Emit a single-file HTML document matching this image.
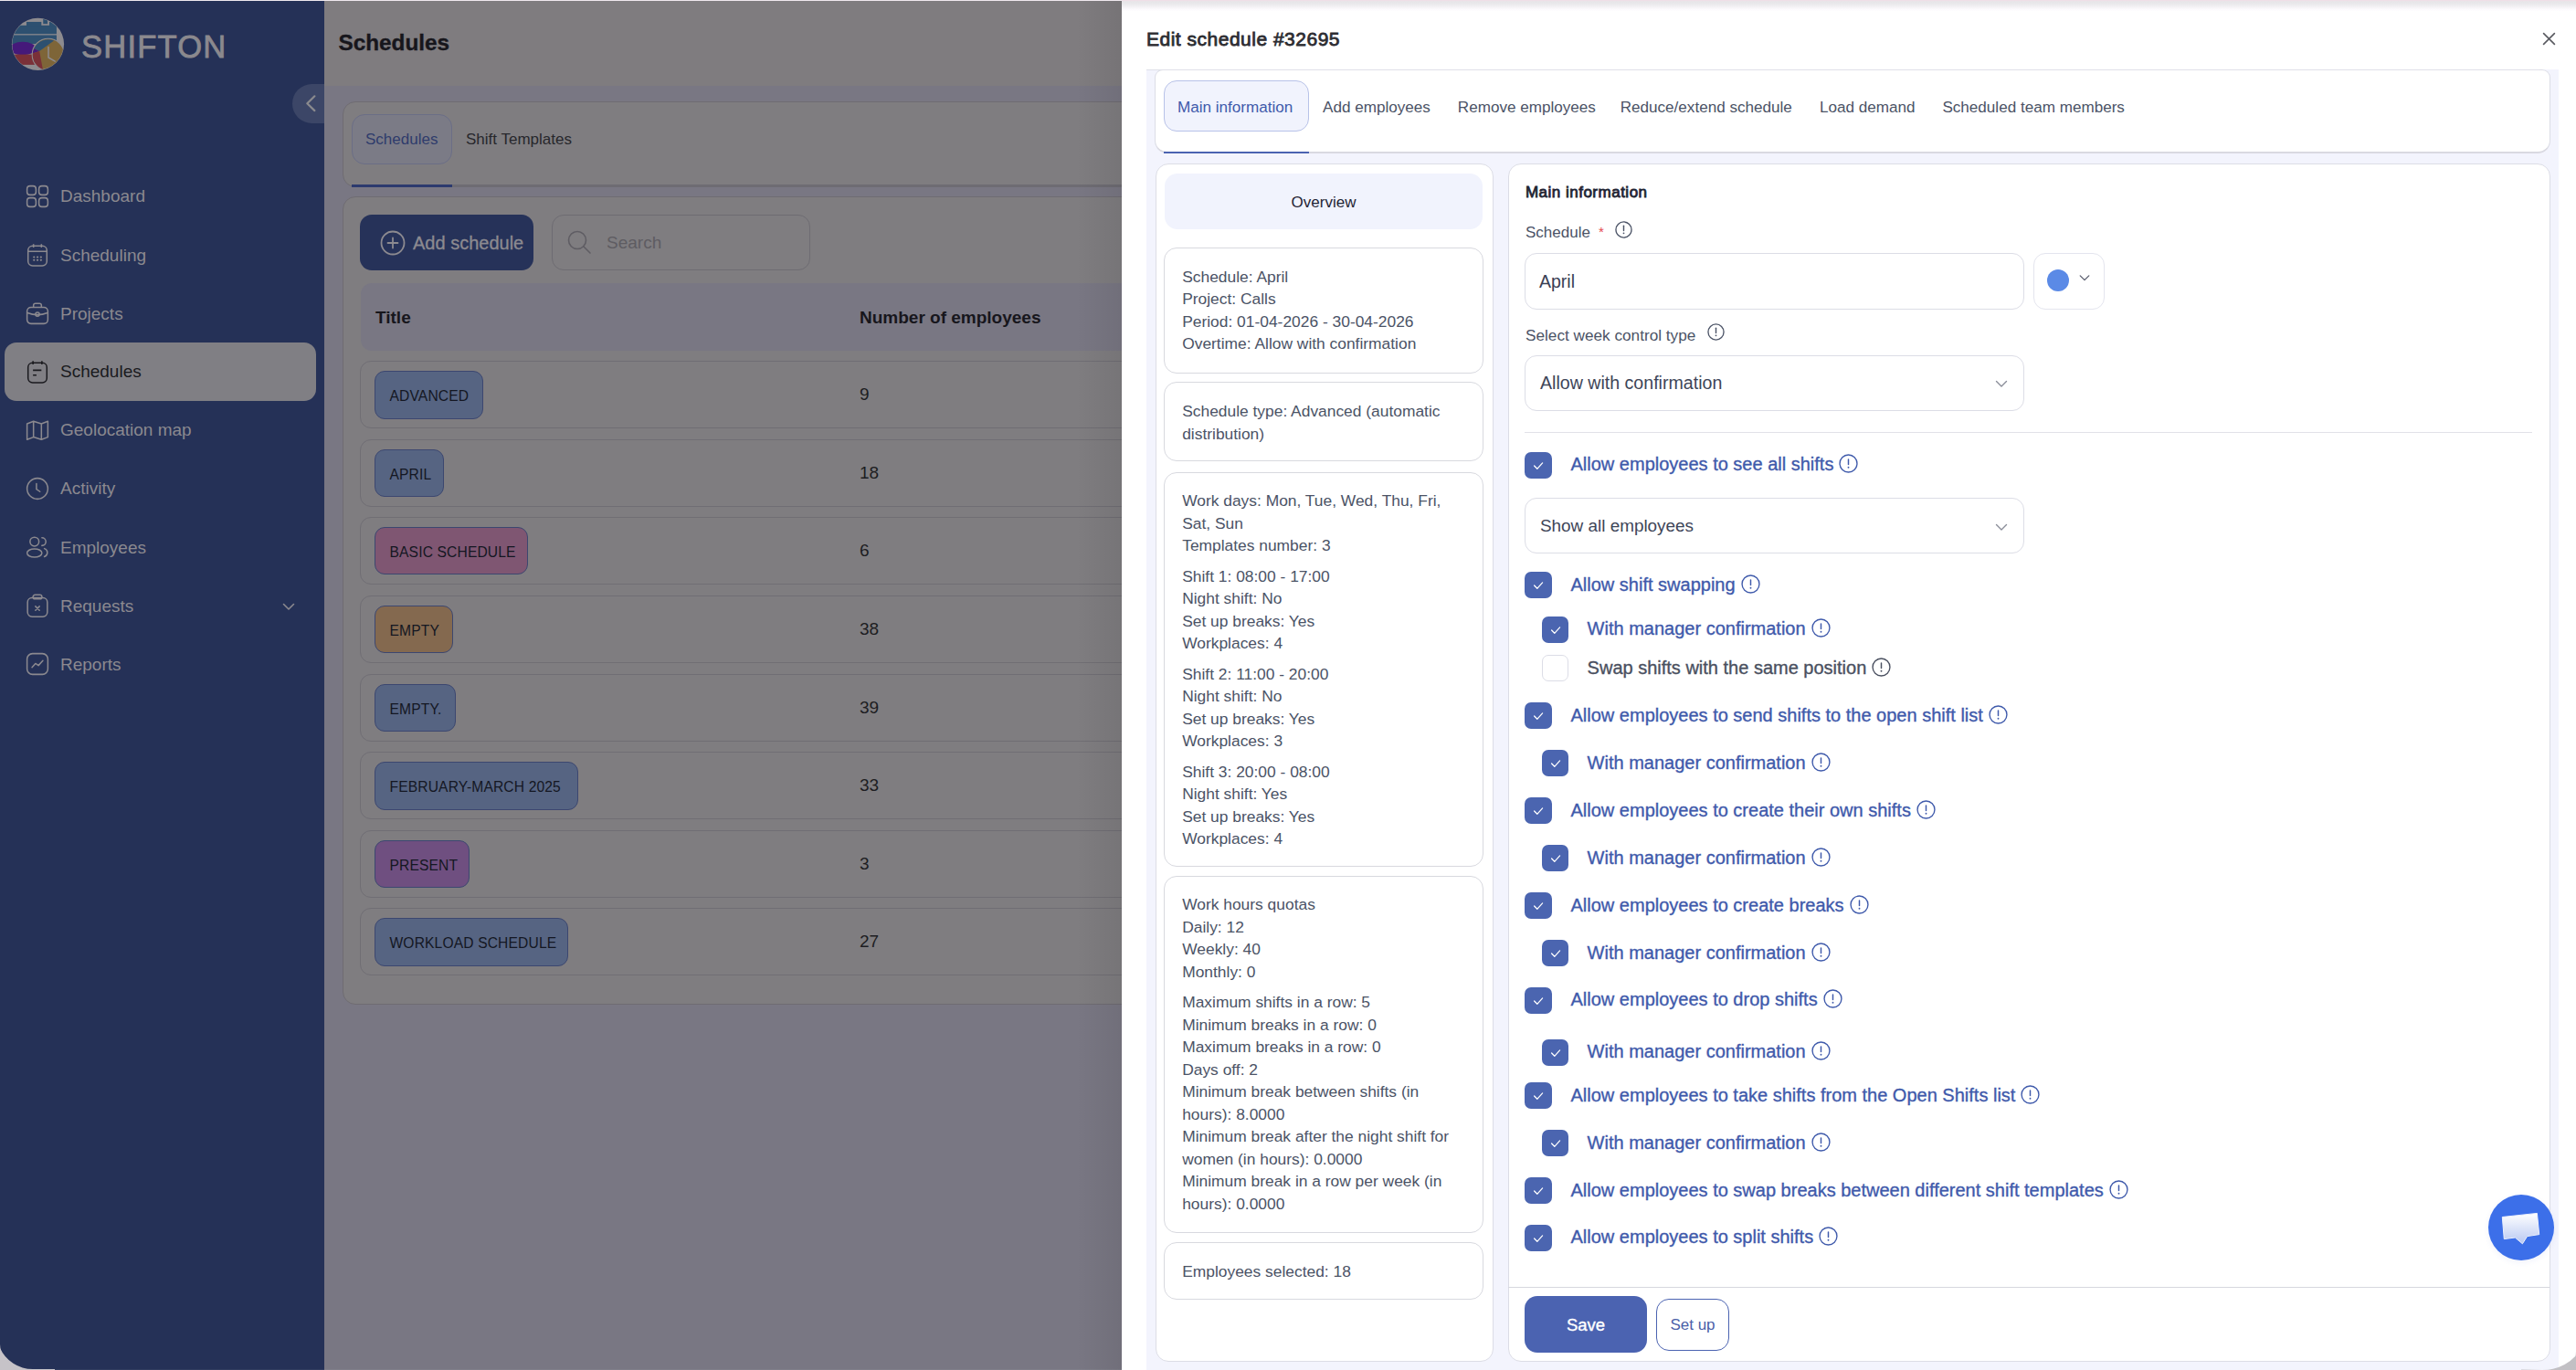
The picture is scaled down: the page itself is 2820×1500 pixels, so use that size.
<!DOCTYPE html>
<html><head><meta charset="utf-8">
<style>
*{box-sizing:border-box;margin:0;padding:0}
html,body{width:2820px;height:1500px;overflow:hidden;background:#c9c6cb}
body{font-family:"Liberation Sans",sans-serif;position:relative}
.a{position:absolute}
.t{position:absolute;white-space:nowrap}
.ii{display:inline-block;vertical-align:top;margin-left:6px;margin-top:3px;-webkit-text-stroke:0}
/* sidebar */
#sb{left:0;top:1px;width:355px;height:1499px;background:#253157;border-bottom-left-radius:28px}
.nav{position:absolute;left:66px;font-size:19px;color:#8b898f;line-height:30px;height:30px}
.nic{position:absolute;left:28px;width:26px;height:26px}
/* main */
#mh{left:355px;top:1px;width:873px;height:92.5px;background:#7f7c7f}
#mb{left:355px;top:93.5px;width:873px;height:1406px;background:#797783}
.card{position:absolute;background:#7f7d80;border:1px solid #6f6c72;border-radius:14px}
.row{position:absolute;left:394px;width:900px;height:74px;border:1px solid #706e74;border-radius:12px;background:#7f7d80}
.badge{position:absolute;left:15px;top:10px;height:52.5px;border:1px solid #3c4770;border-radius:11px;font-size:15.6px;line-height:53px;padding-left:15.5px;color:#141722;letter-spacing:0.15px;white-space:nowrap}
.num{position:absolute;left:546px;top:0;line-height:72px;font-size:19px;color:#1d1d22}
/* modal */
#md{left:1228px;top:0;width:1592px;height:1500px;background:#fff;border-bottom-right-radius:20px;overflow:hidden}
</style></head>
<body>
<div class="a" style="left:0;top:0;width:2820px;height:1px;background:#efe8ee"></div>


<!-- SIDEBAR -->
<div id="sb" class="a"></div>
<svg class="a" style="left:8px;top:16px" width="68" height="66" viewBox="0 0 1412 1370">
<defs><clipPath id="lc"><circle cx="695" cy="672" r="584"/></clipPath></defs>
<circle cx="695" cy="672" r="594" fill="#8d8b8f"/>
<g clip-path="url(#lc)">
<rect x="60" y="245" width="1060" height="195" fill="#2d5070"/>
<rect x="435" y="165" width="340" height="90" fill="#2d5070"/>
<rect x="815" y="60" width="100" height="150" fill="#2d5070"/>
<rect x="955" y="165" width="165" height="90" fill="#2d5070"/>
<rect x="60" y="466" width="1060" height="200" fill="#2d5070"/>
<ellipse cx="350" cy="770" rx="300" ry="150" fill="#45197a"/>
<rect x="60" y="905" width="560" height="235" fill="#7a3038"/>
<circle cx="930" cy="912" r="362" fill="#7e6538"/>
<path d="M730,830 L1060,590 A362 362 0 0 0 600,770 Z" fill="#2d5070"/>
<path d="M730,830 L600,770 A362 362 0 0 0 572,880 Z" fill="#45197a"/>
<path d="M730,830 L572,880 A362 362 0 0 0 810,1255 Z" fill="#7a3038"/>
<circle cx="930" cy="912" r="366" fill="none" stroke="#8d8b8f" stroke-width="22"/>
<path d="M935,735 V975 L1085,1060" fill="none" stroke="#8d8b8f" stroke-width="32" stroke-linejoin="round" stroke-linecap="round"/>
</g>
</svg>
<div class="t" style="left:89px;top:28.5px;font-size:34.6px;line-height:44px;color:#8b898e;letter-spacing:1.2px;-webkit-text-stroke:0.8px #8b898e">SHIFTON</div>
<div class="a" style="left:320px;top:92px;width:35px;height:43px;background:#3c4667;border-radius:21.5px 0 0 21.5px"></div>
<svg class="a" style="left:330px;top:100px" width="20" height="26" viewBox="0 0 20 26"><path d="M14.4 5.3 L6.3 13.2 L14.4 21.1" fill="none" stroke="#8a8a8e" stroke-width="2.2" stroke-linecap="round" stroke-linejoin="round"/></svg>

<div class="a" style="left:5px;top:375px;width:341px;height:64px;background:#807f84;border-radius:13px"></div>
<svg class="a" style="left:28px;top:201.7px" width="26" height="26" viewBox="0 0 24 24" fill="none" stroke="#8b898f" stroke-width="1.4"><rect x="1.5" y="1.5" width="9" height="9" rx="3"/><rect x="13.5" y="1.5" width="9" height="9" rx="3"/><rect x="1.5" y="13.5" width="9" height="9" rx="3"/><rect x="13.5" y="13.5" width="9" height="9" rx="3"/></svg>
<div class="nav" style="top:200.2px;color:#8b898f">Dashboard</div>
<svg class="a" style="left:28px;top:266.0px" width="26" height="26" viewBox="0 0 24 24" fill="none" stroke="#8b898f" stroke-width="1.4"><rect x="2.5" y="3" width="19" height="20" rx="4.5"/><path d="M2.5 8.5H21.5M8 1.2V4.5M16 1.2V4.5"/><path d="M8.5 14.3h.1M12 14.3h.1M15.5 14.3h.1M8.5 17.3h.1M12 17.3h.1M15.5 17.3h.1" stroke-width="2" stroke-linecap="round"/></svg>
<div class="nav" style="top:264.5px;color:#8b898f">Scheduling</div>
<svg class="a" style="left:28px;top:330.0px" width="26" height="26" viewBox="0 0 24 24" fill="none" stroke="#8b898f" stroke-width="1.4"><rect x="1.5" y="6" width="21" height="16.5" rx="4"/><path d="M8 6V4a2 2 0 0 1 2-2h4a2 2 0 0 1 2 2v2"/><path d="M1.8 11.5 Q12 15.5 22.2 11.5"/><circle cx="12" cy="13" r="2"/></svg>
<div class="nav" style="top:328.5px;color:#8b898f">Projects</div>
<svg class="a" style="left:28px;top:393.9px" width="26" height="26" viewBox="0 0 24 24" fill="none" stroke="#1a1a1e" stroke-width="1.4"><rect x="2.5" y="3" width="19" height="20" rx="4.5"/><path d="M7.5 1.2V4.5M16.5 1.2V4.5M7.5 10.5H16M7.5 15.5H11"/></svg>
<div class="nav" style="top:392.4px;color:#1a1a1e">Schedules</div>
<svg class="a" style="left:28px;top:457.9px" width="26" height="26" viewBox="0 0 24 24" fill="none" stroke="#8b898f" stroke-width="1.4"><path d="M1.5 5.5 L8 3 L16 5.5 L22.5 3 V19 L16 21.5 L8 19 L1.5 21.5 Z M8 3 V19 M16 5.5 V21.5" stroke-linejoin="round"/></svg>
<div class="nav" style="top:456.4px;color:#8b898f">Geolocation map</div>
<svg class="a" style="left:28px;top:521.9px" width="26" height="26" viewBox="0 0 24 24" fill="none" stroke="#8b898f" stroke-width="1.4"><circle cx="12" cy="12" r="10.5"/><path d="M11 7V12.5L14.5 15" stroke-linecap="round"/></svg>
<div class="nav" style="top:520.4px;color:#8b898f">Activity</div>
<svg class="a" style="left:28px;top:586.2px" width="26" height="26" viewBox="0 0 24 24" fill="none" stroke="#8b898f" stroke-width="1.4"><circle cx="9" cy="6.5" r="4.5"/><ellipse cx="9" cy="18" rx="7.5" ry="4.2"/><path d="M16.5 2.5a4 4 0 0 1 0 8M19 13.5a4.3 4.3 0 0 1 0 8.2" stroke-linecap="round"/></svg>
<div class="nav" style="top:584.7px;color:#8b898f">Employees</div>
<svg class="a" style="left:28px;top:650.2px" width="26" height="26" viewBox="0 0 24 24" fill="none" stroke="#8b898f" stroke-width="1.4"><rect x="2" y="4.2" width="20" height="19" rx="4.5"/><rect x="7.5" y="1.2" width="9" height="4.2" rx="2"/><path d="M10 12.8l4 4M14 12.8l-4 4" stroke-linecap="round"/></svg>
<div class="nav" style="top:648.7px;color:#8b898f">Requests</div>
<svg class="a" style="left:28px;top:714.1px" width="26" height="26" viewBox="0 0 24 24" fill="none" stroke="#8b898f" stroke-width="1.4"><rect x="1.5" y="1.5" width="21" height="21" rx="5.5"/><path d="M6.5 15.5 L10 11.5 L13 13.5 L17.5 8.5" stroke-linecap="round" stroke-linejoin="round"/></svg>
<div class="nav" style="top:712.6px;color:#8b898f">Reports</div>
<svg class="a" style="left:307px;top:655px" width="18" height="18" viewBox="0 0 18 18"><path d="M3.5 6.5 L9 12 L14.5 6.5" fill="none" stroke="#8b898f" stroke-width="1.6" stroke-linecap="round" stroke-linejoin="round"/></svg>


<!-- MAIN -->
<div id="mh" class="a"></div>
<div id="mb" class="a"></div>
<div class="t" style="left:370.5px;top:33.2px;font-size:24.3px;line-height:28px;font-weight:bold;color:#17161c;-webkit-text-stroke:0.35px #17161c">Schedules</div>
<div class="card" style="left:375px;top:111px;width:900px;height:94px"></div>
<div class="a" style="left:385px;top:202px;width:843px;height:3px;background:#6e6c73"></div>
<div class="a" style="left:385px;top:202px;width:110px;height:3px;background:#2c3a6e"></div>
<div class="a" style="left:385px;top:125px;width:110px;height:55px;border:1px solid #6b6e86;border-radius:14px;background:#7b7b86"></div>
<div class="t" style="left:400px;top:141px;font-size:17px;line-height:24px;color:#2f3c6c">Schedules</div>
<div class="t" style="left:510px;top:141px;font-size:17px;line-height:24px;color:#27272c">Shift Templates</div>
<div class="card" style="left:375px;top:215px;width:900px;height:885px"></div>
<div class="a" style="left:394px;top:235px;width:190px;height:61px;background:#263259;border-radius:13px"></div>
<svg class="a" style="left:416px;top:252px" width="28" height="28" viewBox="0 0 28 28" fill="none" stroke="#8c8a90" stroke-width="1.8"><circle cx="14" cy="14" r="12.5"/><path d="M14 8.5V19.5M8.5 14H19.5" stroke-linecap="round"/></svg>
<div class="t" style="left:452px;top:252px;font-size:20px;line-height:28px;color:#8c8a90;-webkit-text-stroke:0.3px #8c8a90">Add schedule</div>
<div class="a" style="left:604px;top:235px;width:283px;height:61px;border:1px solid #6e6c72;border-radius:13px"></div>
<svg class="a" style="left:620px;top:251px" width="30" height="30" viewBox="0 0 30 30" fill="none" stroke="#5f5d63" stroke-width="1.6"><circle cx="12" cy="12" r="9.5"/><path d="M19 19L26 26" stroke-linecap="round"/></svg>
<div class="t" style="left:664px;top:252px;font-size:19px;line-height:28px;color:#5e5c62">Search</div>
<div class="a" style="left:395px;top:310px;width:850px;height:73.8px;background:#797783;border-radius:12px"></div>
<div class="t" style="left:411px;top:334px;font-size:19px;line-height:28px;font-weight:bold;color:#17161c">Title</div>
<div class="t" style="left:941px;top:334px;font-size:19px;line-height:28px;font-weight:bold;color:#17161c">Number of employees</div>
<div class="row" style="top:395.0px"><div class="badge" style="background:#566482;width:119px">ADVANCED</div><div class="num">9</div></div>
<div class="row" style="top:480.7px"><div class="badge" style="background:#566482;width:76px">APRIL</div><div class="num">18</div></div>
<div class="row" style="top:565.8px"><div class="badge" style="background:#7f5672;width:168px">BASIC SCHEDULE</div><div class="num">6</div></div>
<div class="row" style="top:651.5px"><div class="badge" style="background:#84694f;width:86px">EMPTY</div><div class="num">38</div></div>
<div class="row" style="top:737.7px"><div class="badge" style="background:#566482;width:89px">EMPTY.</div><div class="num">39</div></div>
<div class="row" style="top:823.4px"><div class="badge" style="background:#566482;width:223px">FEBRUARY-MARCH 2025</div><div class="num">33</div></div>
<div class="row" style="top:908.6px"><div class="badge" style="background:#6f4f80;width:104px">PRESENT</div><div class="num">3</div></div>
<div class="row" style="top:994.2px"><div class="badge" style="background:#566482;width:212px">WORKLOAD SCHEDULE</div><div class="num">27</div></div>


<div class="a" style="left:0;top:1499px;width:1228px;height:1px;background:rgba(255,255,255,0.06)"></div>
<!-- MODAL -->
<div class="a" style="left:1178px;top:1px;width:50px;height:1499px;background:linear-gradient(90deg,rgba(0,0,0,0),rgba(0,0,0,0.07))"></div>
<div id="md" class="a"></div>
<div class="a" style="left:1228px;top:0;width:1592px;height:12px;background:linear-gradient(#efdfe7 0,#efdfe7 1.1px,#e7e6e9 1.6px,#e9e8eb 4px,#f2f0f3 7px,#fcfafd 10px,#ffffff 13px)"></div>
<div class="t" style="left:1255px;top:28.5px;font-size:21px;line-height:28px;letter-spacing:0.5px;-webkit-text-stroke:0.8px #2d2d32;color:#2d2d32">Edit schedule #32695</div>
<svg class="a" style="left:2777px;top:29px" width="27" height="27" viewBox="0 0 27 27"><path d="M7.6 7.6L19.4 19.4M19.4 7.6L7.6 19.4" stroke="#5a5b61" stroke-width="1.6" stroke-linecap="round"/></svg>
<div class="a" style="left:1255px;top:76px;width:1546px;height:1424px;background:#f3f4fd"></div>
<!-- tabs card -->
<div class="a" style="left:1264.2px;top:76px;width:1527.6px;height:92px;background:#fff;border:1px solid #dcdde6;border-bottom:2px solid #d9d9e1;border-radius:9px 9px 14px 14px"></div>
<div class="a" style="left:1255px;top:76px;width:1525px;height:1px;background:#dfe0e8"></div>
<div class="a" style="left:1274px;top:166px;width:158.7px;height:2px;background:#4b63b1"></div>
<div class="a" style="left:1274px;top:88px;width:158.7px;height:55.5px;background:#f1f3fd;border:1px solid #b8c2e8;border-radius:14px"></div>
<div class="t" style="left:1289px;top:105.5px;font-size:17.1px;line-height:24px;color:#3f5aab">Main information</div>
<div class="t" style="left:1448px;top:105.5px;font-size:17.1px;line-height:24px;color:#4b5366">Add employees</div>
<div class="t" style="left:1595.8px;top:105.5px;font-size:17.1px;line-height:24px;color:#4b5366">Remove employees</div>
<div class="t" style="left:1773.7px;top:105.5px;font-size:17.1px;line-height:24px;color:#4b5366">Reduce/extend schedule</div>
<div class="t" style="left:1992px;top:105.5px;font-size:17.1px;line-height:24px;color:#4b5366">Load demand</div>
<div class="t" style="left:2126.4px;top:105.5px;font-size:17.1px;line-height:24px;color:#4b5366">Scheduled team members</div>

<div class="a" style="left:1264.6px;top:179.2px;width:370.1px;height:1311.8px;background:#fff;border:1px solid #dcdde6;border-radius:14px"></div>
<div class="a" style="left:1275px;top:189.7px;width:348px;height:61.7px;background:#f1f3fd;border-radius:14px"></div>
<div class="t" style="left:1275px;top:210px;width:348px;text-align:center;font-size:17px;line-height:24px;color:#1f2535">Overview</div>
<div class="a" style="left:1274px;top:271px;width:350px;height:138.2px;border:1px solid #d8d9df;border-radius:14px"></div>
<div class="a" style="left:1294.2px;top:290.5px;font-size:17.4px;line-height:24.5px;color:#4b5366;white-space:nowrap"><div style="margin-top:0px">Schedule: April<br>Project: Calls<br>Period: 01-04-2026 - 30-04-2026<br>Overtime: Allow with confirmation</div></div>
<div class="a" style="left:1274px;top:417.8px;width:350px;height:87.2px;border:1px solid #d8d9df;border-radius:14px"></div>
<div class="a" style="left:1294.2px;top:438.1px;font-size:17.4px;line-height:24.5px;color:#4b5366;white-space:nowrap"><div style="margin-top:0px">Schedule type: Advanced (automatic<br>distribution)</div></div>
<div class="a" style="left:1274px;top:516.5px;width:350px;height:432.5px;border:1px solid #d8d9df;border-radius:14px"></div>
<div class="a" style="left:1294.2px;top:536.0px;font-size:17.4px;line-height:24.5px;color:#4b5366;white-space:nowrap"><div style="margin-top:0px">Work days: Mon, Tue, Wed, Thu, Fri,<br>Sat, Sun<br>Templates number: 3</div><div style="margin-top:9px">Shift 1: 08:00 - 17:00<br>Night shift: No<br>Set up breaks: Yes<br>Workplaces: 4</div><div style="margin-top:9px">Shift 2: 11:00 - 20:00<br>Night shift: No<br>Set up breaks: Yes<br>Workplaces: 3</div><div style="margin-top:9px">Shift 3: 20:00 - 08:00<br>Night shift: Yes<br>Set up breaks: Yes<br>Workplaces: 4</div></div>
<div class="a" style="left:1274px;top:958.8px;width:350px;height:391.6px;border:1px solid #d8d9df;border-radius:14px"></div>
<div class="a" style="left:1294.2px;top:978.3px;font-size:17.4px;line-height:24.5px;color:#4b5366;white-space:nowrap"><div style="margin-top:0px">Work hours quotas<br>Daily: 12<br>Weekly: 40<br>Monthly: 0</div><div style="margin-top:9px">Maximum shifts in a row: 5<br>Minimum breaks in a row: 0<br>Maximum breaks in a row: 0<br>Days off: 2<br>Minimum break between shifts (in<br>hours): 8.0000<br>Minimum break after the night shift for<br>women (in hours): 0.0000<br>Minimum break in a row per week (in<br>hours): 0.0000</div></div>
<div class="a" style="left:1274px;top:1360.4px;width:350px;height:62.6px;border:1px solid #d8d9df;border-radius:14px"></div>
<div class="a" style="left:1294.2px;top:1379.9px;font-size:17.4px;line-height:24.5px;color:#4b5366;white-space:nowrap"><div style="margin-top:0px">Employees selected: 18</div></div>

<div class="a" style="left:1650.5px;top:179.2px;width:1141.1px;height:1311.8px;background:#fff;border:1px solid #dcdde6;border-radius:14px"></div>
<div class="t" style="left:1669.9px;top:198.6px;font-size:17px;line-height:24px;letter-spacing:0.5px;-webkit-text-stroke:0.8px #1f2433;color:#1f2433">Main information</div>
<div class="t" style="left:1670px;top:242.8px;font-size:17px;line-height:24px;color:#4b5366">Schedule</div>
<div class="t" style="left:1750px;top:244px;font-size:15px;line-height:20px;color:#e5484d">*</div>
<svg class="a" style="left:1767.8px;top:241.8px" width="19" height="19" viewBox="0 0 20 20"><circle cx="10" cy="10" r="9" fill="none" stroke="#4b5366" stroke-width="1.4"/><path d="M10 5.6V11" stroke="#4b5366" stroke-width="1.5" stroke-linecap="round"/><circle cx="10" cy="14" r="0.95" fill="#4b5366"/></svg>

<div class="a" style="left:1669.2px;top:277.4px;width:546.4px;height:61.4px;border:1px solid #dcdde6;border-radius:13px"></div>
<div class="t" style="left:1685px;top:294px;font-size:19.5px;line-height:28px;color:#3a4054">April</div>
<div class="a" style="left:2226px;top:277.4px;width:78.4px;height:61.5px;border:1px solid #e4e5ee;border-radius:13px"></div>
<div class="a" style="left:2241px;top:294.7px;width:24px;height:24px;border-radius:12px;background:#5b8ae6"></div>
<svg class="a" style="left:2274.6px;top:297.0px" width="14" height="14" viewBox="0 0 16 16"><path d="M2.5 5.5L8 11L13.5 5.5" fill="none" stroke="#55596a" stroke-width="1.4" stroke-linecap="round" stroke-linejoin="round"/></svg>
<div class="t" style="left:1670px;top:355px;font-size:17.2px;line-height:24px;color:#4b5366">Select week control type</div>
<svg class="a" style="left:1869.0px;top:354.3px" width="19" height="19" viewBox="0 0 20 20"><circle cx="10" cy="10" r="9" fill="none" stroke="#4b5366" stroke-width="1.4"/><path d="M10 5.6V11" stroke="#4b5366" stroke-width="1.5" stroke-linecap="round"/><circle cx="10" cy="14" r="0.95" fill="#4b5366"/></svg>

<div class="a" style="left:1669.2px;top:388.5px;width:546.4px;height:61.3px;border:1px solid #dcdde6;border-radius:13px"></div>
<div class="t" style="left:1686px;top:404.7px;font-size:19.6px;line-height:28px;color:#3e4558">Allow with confirmation</div>
<svg class="a" style="left:2183.0px;top:411.7px" width="16" height="16" viewBox="0 0 16 16"><path d="M2.5 5.5L8 11L13.5 5.5" fill="none" stroke="#8a8d99" stroke-width="1.4" stroke-linecap="round" stroke-linejoin="round"/></svg>
<div class="a" style="left:1669.2px;top:472.7px;width:1102.5px;height:1px;background:#e1e2e8"></div>
<div class="a" style="left:1669px;top:494.5px;width:30px;height:29px;background:#4b65b0;border-radius:7px"></div><svg class="a" style="left:1669px;top:494.5px" width="30" height="29" viewBox="0 0 30 29"><path d="M10.6 15L13.8 18.3L19.6 11.9" fill="none" stroke="#fff" stroke-width="1.25" stroke-linecap="round" stroke-linejoin="round"/></svg>
<div class="t lbl" style="left:1719.5px;top:494.2px;font-size:20px;line-height:28px;color:#3f5aab;-webkit-text-stroke:0.35px #3f5aab">Allow employees to see all shifts<svg class="ii" width="21" height="21" viewBox="0 0 20 20"><circle cx="10" cy="10" r="9" fill="none" stroke="#3f5aab" stroke-width="1.3"/><path d="M10 5.6V11" stroke="#3f5aab" stroke-width="1.4" stroke-linecap="round"/><circle cx="10" cy="14" r="0.9" fill="#3f5aab"/></svg></div>
<div class="a" style="left:1669px;top:625.9px;width:30px;height:29px;background:#4b65b0;border-radius:7px"></div><svg class="a" style="left:1669px;top:625.9px" width="30" height="29" viewBox="0 0 30 29"><path d="M10.6 15L13.8 18.3L19.6 11.9" fill="none" stroke="#fff" stroke-width="1.25" stroke-linecap="round" stroke-linejoin="round"/></svg>
<div class="t lbl" style="left:1719.5px;top:625.6px;font-size:20px;line-height:28px;color:#3f5aab;-webkit-text-stroke:0.35px #3f5aab">Allow shift swapping<svg class="ii" width="21" height="21" viewBox="0 0 20 20"><circle cx="10" cy="10" r="9" fill="none" stroke="#3f5aab" stroke-width="1.3"/><path d="M10 5.6V11" stroke="#3f5aab" stroke-width="1.4" stroke-linecap="round"/><circle cx="10" cy="14" r="0.9" fill="#3f5aab"/></svg></div>
<div class="a" style="left:1688px;top:674.5px;width:29px;height:29px;background:#4b65b0;border-radius:7px"></div><svg class="a" style="left:1687.5px;top:674.5px" width="30" height="29" viewBox="0 0 30 29"><path d="M10.6 15L13.8 18.3L19.6 11.9" fill="none" stroke="#fff" stroke-width="1.25" stroke-linecap="round" stroke-linejoin="round"/></svg>
<div class="t lbl" style="left:1737.6px;top:674.2px;font-size:20px;line-height:28px;color:#3f5aab;-webkit-text-stroke:0.35px #3f5aab">With manager confirmation<svg class="ii" width="21" height="21" viewBox="0 0 20 20"><circle cx="10" cy="10" r="9" fill="none" stroke="#3f5aab" stroke-width="1.3"/><path d="M10 5.6V11" stroke="#3f5aab" stroke-width="1.4" stroke-linecap="round"/><circle cx="10" cy="14" r="0.9" fill="#3f5aab"/></svg></div>
<div class="a" style="left:1688px;top:716.9px;width:29px;height:29px;background:#fff;border:1px solid #dcdde6;border-radius:7px"></div>
<div class="t lbl" style="left:1737.6px;top:716.6px;font-size:20px;line-height:28px;color:#4a5060;-webkit-text-stroke:0.35px #4a5060">Swap shifts with the same position<svg class="ii" width="21" height="21" viewBox="0 0 20 20"><circle cx="10" cy="10" r="9" fill="none" stroke="#4a5060" stroke-width="1.3"/><path d="M10 5.6V11" stroke="#4a5060" stroke-width="1.4" stroke-linecap="round"/><circle cx="10" cy="14" r="0.9" fill="#4a5060"/></svg></div>
<div class="a" style="left:1669px;top:769.0px;width:30px;height:29px;background:#4b65b0;border-radius:7px"></div><svg class="a" style="left:1669px;top:769.0px" width="30" height="29" viewBox="0 0 30 29"><path d="M10.6 15L13.8 18.3L19.6 11.9" fill="none" stroke="#fff" stroke-width="1.25" stroke-linecap="round" stroke-linejoin="round"/></svg>
<div class="t lbl" style="left:1719.5px;top:768.7px;font-size:20px;line-height:28px;color:#3f5aab;-webkit-text-stroke:0.35px #3f5aab">Allow employees to send shifts to the open shift list<svg class="ii" width="21" height="21" viewBox="0 0 20 20"><circle cx="10" cy="10" r="9" fill="none" stroke="#3f5aab" stroke-width="1.3"/><path d="M10 5.6V11" stroke="#3f5aab" stroke-width="1.4" stroke-linecap="round"/><circle cx="10" cy="14" r="0.9" fill="#3f5aab"/></svg></div>
<div class="a" style="left:1688px;top:820.8px;width:29px;height:29px;background:#4b65b0;border-radius:7px"></div><svg class="a" style="left:1687.5px;top:820.8px" width="30" height="29" viewBox="0 0 30 29"><path d="M10.6 15L13.8 18.3L19.6 11.9" fill="none" stroke="#fff" stroke-width="1.25" stroke-linecap="round" stroke-linejoin="round"/></svg>
<div class="t lbl" style="left:1737.6px;top:820.5px;font-size:20px;line-height:28px;color:#3f5aab;-webkit-text-stroke:0.35px #3f5aab">With manager confirmation<svg class="ii" width="21" height="21" viewBox="0 0 20 20"><circle cx="10" cy="10" r="9" fill="none" stroke="#3f5aab" stroke-width="1.3"/><path d="M10 5.6V11" stroke="#3f5aab" stroke-width="1.4" stroke-linecap="round"/><circle cx="10" cy="14" r="0.9" fill="#3f5aab"/></svg></div>
<div class="a" style="left:1669px;top:873.0px;width:30px;height:29px;background:#4b65b0;border-radius:7px"></div><svg class="a" style="left:1669px;top:873.0px" width="30" height="29" viewBox="0 0 30 29"><path d="M10.6 15L13.8 18.3L19.6 11.9" fill="none" stroke="#fff" stroke-width="1.25" stroke-linecap="round" stroke-linejoin="round"/></svg>
<div class="t lbl" style="left:1719.5px;top:872.7px;font-size:20px;line-height:28px;color:#3f5aab;-webkit-text-stroke:0.35px #3f5aab">Allow employees to create their own shifts<svg class="ii" width="21" height="21" viewBox="0 0 20 20"><circle cx="10" cy="10" r="9" fill="none" stroke="#3f5aab" stroke-width="1.3"/><path d="M10 5.6V11" stroke="#3f5aab" stroke-width="1.4" stroke-linecap="round"/><circle cx="10" cy="14" r="0.9" fill="#3f5aab"/></svg></div>
<div class="a" style="left:1688px;top:924.8px;width:29px;height:29px;background:#4b65b0;border-radius:7px"></div><svg class="a" style="left:1687.5px;top:924.8px" width="30" height="29" viewBox="0 0 30 29"><path d="M10.6 15L13.8 18.3L19.6 11.9" fill="none" stroke="#fff" stroke-width="1.25" stroke-linecap="round" stroke-linejoin="round"/></svg>
<div class="t lbl" style="left:1737.6px;top:924.5px;font-size:20px;line-height:28px;color:#3f5aab;-webkit-text-stroke:0.35px #3f5aab">With manager confirmation<svg class="ii" width="21" height="21" viewBox="0 0 20 20"><circle cx="10" cy="10" r="9" fill="none" stroke="#3f5aab" stroke-width="1.3"/><path d="M10 5.6V11" stroke="#3f5aab" stroke-width="1.4" stroke-linecap="round"/><circle cx="10" cy="14" r="0.9" fill="#3f5aab"/></svg></div>
<div class="a" style="left:1669px;top:977.0px;width:30px;height:29px;background:#4b65b0;border-radius:7px"></div><svg class="a" style="left:1669px;top:977.0px" width="30" height="29" viewBox="0 0 30 29"><path d="M10.6 15L13.8 18.3L19.6 11.9" fill="none" stroke="#fff" stroke-width="1.25" stroke-linecap="round" stroke-linejoin="round"/></svg>
<div class="t lbl" style="left:1719.5px;top:976.7px;font-size:20px;line-height:28px;color:#3f5aab;-webkit-text-stroke:0.35px #3f5aab">Allow employees to create breaks<svg class="ii" width="21" height="21" viewBox="0 0 20 20"><circle cx="10" cy="10" r="9" fill="none" stroke="#3f5aab" stroke-width="1.3"/><path d="M10 5.6V11" stroke="#3f5aab" stroke-width="1.4" stroke-linecap="round"/><circle cx="10" cy="14" r="0.9" fill="#3f5aab"/></svg></div>
<div class="a" style="left:1688px;top:1029.1px;width:29px;height:29px;background:#4b65b0;border-radius:7px"></div><svg class="a" style="left:1687.5px;top:1029.1px" width="30" height="29" viewBox="0 0 30 29"><path d="M10.6 15L13.8 18.3L19.6 11.9" fill="none" stroke="#fff" stroke-width="1.25" stroke-linecap="round" stroke-linejoin="round"/></svg>
<div class="t lbl" style="left:1737.6px;top:1028.8px;font-size:20px;line-height:28px;color:#3f5aab;-webkit-text-stroke:0.35px #3f5aab">With manager confirmation<svg class="ii" width="21" height="21" viewBox="0 0 20 20"><circle cx="10" cy="10" r="9" fill="none" stroke="#3f5aab" stroke-width="1.3"/><path d="M10 5.6V11" stroke="#3f5aab" stroke-width="1.4" stroke-linecap="round"/><circle cx="10" cy="14" r="0.9" fill="#3f5aab"/></svg></div>
<div class="a" style="left:1669px;top:1080.7px;width:30px;height:29px;background:#4b65b0;border-radius:7px"></div><svg class="a" style="left:1669px;top:1080.7px" width="30" height="29" viewBox="0 0 30 29"><path d="M10.6 15L13.8 18.3L19.6 11.9" fill="none" stroke="#fff" stroke-width="1.25" stroke-linecap="round" stroke-linejoin="round"/></svg>
<div class="t lbl" style="left:1719.5px;top:1080.4px;font-size:20px;line-height:28px;color:#3f5aab;-webkit-text-stroke:0.35px #3f5aab">Allow employees to drop shifts<svg class="ii" width="21" height="21" viewBox="0 0 20 20"><circle cx="10" cy="10" r="9" fill="none" stroke="#3f5aab" stroke-width="1.3"/><path d="M10 5.6V11" stroke="#3f5aab" stroke-width="1.4" stroke-linecap="round"/><circle cx="10" cy="14" r="0.9" fill="#3f5aab"/></svg></div>
<div class="a" style="left:1688px;top:1137.5px;width:29px;height:29px;background:#4b65b0;border-radius:7px"></div><svg class="a" style="left:1687.5px;top:1137.5px" width="30" height="29" viewBox="0 0 30 29"><path d="M10.6 15L13.8 18.3L19.6 11.9" fill="none" stroke="#fff" stroke-width="1.25" stroke-linecap="round" stroke-linejoin="round"/></svg>
<div class="t lbl" style="left:1737.6px;top:1137.2px;font-size:20px;line-height:28px;color:#3f5aab;-webkit-text-stroke:0.35px #3f5aab">With manager confirmation<svg class="ii" width="21" height="21" viewBox="0 0 20 20"><circle cx="10" cy="10" r="9" fill="none" stroke="#3f5aab" stroke-width="1.3"/><path d="M10 5.6V11" stroke="#3f5aab" stroke-width="1.4" stroke-linecap="round"/><circle cx="10" cy="14" r="0.9" fill="#3f5aab"/></svg></div>
<div class="a" style="left:1669px;top:1184.8px;width:30px;height:29px;background:#4b65b0;border-radius:7px"></div><svg class="a" style="left:1669px;top:1184.8px" width="30" height="29" viewBox="0 0 30 29"><path d="M10.6 15L13.8 18.3L19.6 11.9" fill="none" stroke="#fff" stroke-width="1.25" stroke-linecap="round" stroke-linejoin="round"/></svg>
<div class="t lbl" style="left:1719.5px;top:1184.5px;font-size:20px;line-height:28px;color:#3f5aab;-webkit-text-stroke:0.35px #3f5aab">Allow employees to take shifts from the Open Shifts list<svg class="ii" width="21" height="21" viewBox="0 0 20 20"><circle cx="10" cy="10" r="9" fill="none" stroke="#3f5aab" stroke-width="1.3"/><path d="M10 5.6V11" stroke="#3f5aab" stroke-width="1.4" stroke-linecap="round"/><circle cx="10" cy="14" r="0.9" fill="#3f5aab"/></svg></div>
<div class="a" style="left:1688px;top:1237.2px;width:29px;height:29px;background:#4b65b0;border-radius:7px"></div><svg class="a" style="left:1687.5px;top:1237.2px" width="30" height="29" viewBox="0 0 30 29"><path d="M10.6 15L13.8 18.3L19.6 11.9" fill="none" stroke="#fff" stroke-width="1.25" stroke-linecap="round" stroke-linejoin="round"/></svg>
<div class="t lbl" style="left:1737.6px;top:1236.9px;font-size:20px;line-height:28px;color:#3f5aab;-webkit-text-stroke:0.35px #3f5aab">With manager confirmation<svg class="ii" width="21" height="21" viewBox="0 0 20 20"><circle cx="10" cy="10" r="9" fill="none" stroke="#3f5aab" stroke-width="1.3"/><path d="M10 5.6V11" stroke="#3f5aab" stroke-width="1.4" stroke-linecap="round"/><circle cx="10" cy="14" r="0.9" fill="#3f5aab"/></svg></div>
<div class="a" style="left:1669px;top:1289.2px;width:30px;height:29px;background:#4b65b0;border-radius:7px"></div><svg class="a" style="left:1669px;top:1289.2px" width="30" height="29" viewBox="0 0 30 29"><path d="M10.6 15L13.8 18.3L19.6 11.9" fill="none" stroke="#fff" stroke-width="1.25" stroke-linecap="round" stroke-linejoin="round"/></svg>
<div class="t lbl" style="left:1719.5px;top:1288.9px;font-size:20px;line-height:28px;color:#3f5aab;-webkit-text-stroke:0.35px #3f5aab">Allow employees to swap breaks between different shift templates<svg class="ii" width="21" height="21" viewBox="0 0 20 20"><circle cx="10" cy="10" r="9" fill="none" stroke="#3f5aab" stroke-width="1.3"/><path d="M10 5.6V11" stroke="#3f5aab" stroke-width="1.4" stroke-linecap="round"/><circle cx="10" cy="14" r="0.9" fill="#3f5aab"/></svg></div>
<div class="a" style="left:1669px;top:1340.5px;width:30px;height:29px;background:#4b65b0;border-radius:7px"></div><svg class="a" style="left:1669px;top:1340.5px" width="30" height="29" viewBox="0 0 30 29"><path d="M10.6 15L13.8 18.3L19.6 11.9" fill="none" stroke="#fff" stroke-width="1.25" stroke-linecap="round" stroke-linejoin="round"/></svg>
<div class="t lbl" style="left:1719.5px;top:1340.2px;font-size:20px;line-height:28px;color:#3f5aab;-webkit-text-stroke:0.35px #3f5aab">Allow employees to split shifts<svg class="ii" width="21" height="21" viewBox="0 0 20 20"><circle cx="10" cy="10" r="9" fill="none" stroke="#3f5aab" stroke-width="1.3"/><path d="M10 5.6V11" stroke="#3f5aab" stroke-width="1.4" stroke-linecap="round"/><circle cx="10" cy="14" r="0.9" fill="#3f5aab"/></svg></div>

<div class="a" style="left:1669.2px;top:545px;width:546.4px;height:60.5px;border:1px solid #dcdde6;border-radius:13px"></div>
<div class="t" style="left:1686px;top:561.5px;font-size:18.9px;line-height:28px;color:#3e4558">Show all employees</div>
<svg class="a" style="left:2183.0px;top:568.5px" width="16" height="16" viewBox="0 0 16 16"><path d="M2.5 5.5L8 11L13.5 5.5" fill="none" stroke="#8a8d99" stroke-width="1.4" stroke-linecap="round" stroke-linejoin="round"/></svg>

<div class="a" style="left:1651px;top:1409px;width:1140px;height:1px;background:#d6d7de"></div>
<div class="a" style="left:1669px;top:1419.2px;width:134px;height:62px;background:#4b63b1;border-radius:14px"></div>
<div class="t" style="left:1669px;top:1436.5px;width:134px;text-align:center;font-size:18.5px;line-height:28px;color:#fff;-webkit-text-stroke:0.35px #fff">Save</div>
<div class="a" style="left:1813px;top:1422px;width:80px;height:57px;border:1px solid #4b63b1;border-radius:14px"></div>
<div class="t" style="left:1813px;top:1438.6px;width:80px;text-align:center;font-size:17px;line-height:24px;color:#4b60a8">Set up</div>
<div class="a" style="left:2724px;top:1308px;width:72px;height:72px;border-radius:36px;background:#3c6fe9;box-shadow:0 2px 6px rgba(60,90,200,0.08)"></div>
<svg class="a" style="left:2724px;top:1308px" width="72" height="72" viewBox="0 0 72 72"><defs><linearGradient id="cg" x1="0" y1="0" x2="0" y2="1"><stop offset="0" stop-color="#ffffff"/><stop offset="1" stop-color="#b8c8f2"/></linearGradient></defs><path d="M15.3 24.5 L53.4 20.4 L55.7 43.6 L42.6 45.6 L37.4 53.8 L29.4 47 L17.3 48.6 Z" fill="url(#cg)" stroke="#eef2fd" stroke-width="1" stroke-linejoin="round"/></svg>

<svg class="a" style="left:0;top:1440px" width="60" height="60" viewBox="0 1440 60 60"><path d="M0,1475.9 A39.4,39.4 0 0 0 35.8,1498.95 L60,1499 L60,1500 L0,1500 Z" fill="#c6c3c8"/></svg>
<svg class="a" style="left:2760px;top:1440px" width="60" height="60" viewBox="2760 1440 60 60"><path d="M2820,1484.2 A51,51 0 0 1 2783,1499.95 L2760,1499.6 L2760,1500 L2820,1500 Z" fill="#c2c0c4"/></svg>
</body></html>
